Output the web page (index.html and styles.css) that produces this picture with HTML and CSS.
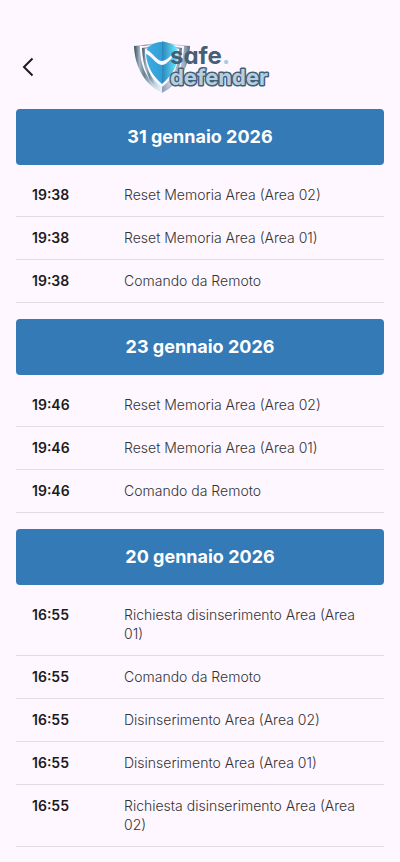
FILE: index.html
```html
<!DOCTYPE html>
<html lang="it">
<head>
    <meta charset="UTF-8">
    <meta name="viewport" content="width=device-width, initial-scale=1.0">
    <title>Safe Defender</title>
    <link rel="stylesheet" href="styles.css">
</head>
<body>
    <header class="header">
        <button class="back" type="button" aria-label="Indietro">
            <svg width="12" height="20" viewBox="0 0 12 20" fill="none" stroke="#1d1b20" stroke-width="2">
                <path d="M10.5 1.5L2 10l8.5 8.5"/>
            </svg>
        </button>
        <svg class="logo" width="142" height="56" viewBox="0 0 142 56" role="img" aria-label="safe. defender">
            <defs>
                <linearGradient id="steel" x1="0" y1="0" x2="1" y2="0">
                    <stop offset="0" stop-color="#34495a"/>
                    <stop offset="0.1" stop-color="#a4b8c6"/>
                    <stop offset="0.18" stop-color="#668195"/>
                    <stop offset="0.32" stop-color="#c3d3df"/>
                    <stop offset="0.49" stop-color="#edf2f8"/>
                    <stop offset="0.51" stop-color="#8f9dba"/>
                    <stop offset="0.75" stop-color="#d8deeb"/>
                    <stop offset="0.9" stop-color="#9aaabd"/>
                    <stop offset="1" stop-color="#53697d"/>
                </linearGradient>
                <linearGradient id="blue" gradientUnits="userSpaceOnUse" x1="17" y1="0" x2="49" y2="0">
                    <stop offset="0" stop-color="#3aaee2"/>
                    <stop offset="0.49" stop-color="#319fd6"/>
                    <stop offset="0.51" stop-color="#2e88bd"/>
                    <stop offset="0.8" stop-color="#4fc6e8"/>
                    <stop offset="1" stop-color="#70f0fb"/>
                </linearGradient>
            </defs>
            <!-- shield -->
            <path fill="url(#steel)" d="M5 7c10-1 19-2 28-5 9 3 18 4 28 5-1 20-9 37-28 47C14 44 6 27 5 7z"/>
            <path fill="#fef7ff" d="M11 7c8 0 15-1 22-4 7 3 14 4 22 4-1 20-6 33-22 43C17 41 11 27 11 7z"/>
            <path fill="url(#steel)" d="M13 9c7-1 14-3 20-6 6 3 13 5 20 6-1 19-6 35-20 44C19 44 14 28 13 9z"/>
            <path fill="#fef7ff" d="M16 10c6-1 12-3 17-7 5 4 11 6 17 7-1 18-5 29-17 38C21 40 16 28 16 10z"/>
            <path fill="url(#blue)" d="M18 10c4-5 9-7 15-7s12 2 15 7l1 3c-6 0-10 9-16 9-5 0-9-8-15-11z"/>
            <path fill="url(#blue)" d="M17 15c6 2 10 11 16 11s10-10 16-11c0 13-7 22-16 30-9-8-15-17-16-30z"/>
            <!-- wordmark -->
            <text class="logo-safe" x="41" y="25">safe<tspan class="logo-dot">.</tspan></text>
            <text class="logo-defender" x="41" y="46">defender</text>
        </svg>
    </header>

    <main class="events">
        <section class="day">
            <h2 class="day-title">31 gennaio 2026</h2>
            <ul class="list">
                <li class="row"><time class="time">19:38</time><span class="text">Reset Memoria Area (Area 02)</span></li>
                <li class="row"><time class="time">19:38</time><span class="text">Reset Memoria Area (Area 01)</span></li>
                <li class="row"><time class="time">19:38</time><span class="text">Comando da Remoto</span></li>
            </ul>
        </section>
        <section class="day">
            <h2 class="day-title">23 gennaio 2026</h2>
            <ul class="list">
                <li class="row"><time class="time">19:46</time><span class="text">Reset Memoria Area (Area 02)</span></li>
                <li class="row"><time class="time">19:46</time><span class="text">Reset Memoria Area (Area 01)</span></li>
                <li class="row"><time class="time">19:46</time><span class="text">Comando da Remoto</span></li>
            </ul>
        </section>
        <section class="day">
            <h2 class="day-title">20 gennaio 2026</h2>
            <ul class="list">
                <li class="row"><time class="time">16:55</time><span class="text">Richiesta disinserimento Area (Area 01)</span></li>
                <li class="row"><time class="time">16:55</time><span class="text">Comando da Remoto</span></li>
                <li class="row"><time class="time">16:55</time><span class="text">Disinserimento Area (Area 02)</span></li>
                <li class="row"><time class="time">16:55</time><span class="text">Disinserimento Area (Area 01)</span></li>
                <li class="row"><time class="time">16:55</time><span class="text">Richiesta disinserimento Area (Area 02)</span></li>
            </ul>
        </section>
    </main>
</body>
</html>
```
FILE: styles.css
```css
* {
    margin: 0;
    padding: 0;
    box-sizing: border-box;
}

body {
    font-family: Inter, 'Liberation Sans', sans-serif;
    background-color: #fef7ff;
    color: #1d1b20;
}

/* Header */
.header {
    display: grid;
    grid-template-columns: 56px 1fr 56px;
    align-items: center;
    padding: 39px 0 14px;
}

.back {
    display: flex;
    align-items: center;
    justify-content: center;
    height: 56px;
    border: none;
    background: none;
    cursor: pointer;
}

.logo {
    justify-self: center;
}

.logo-safe,
.logo-defender {
    font-weight: 700;
    font-feature-settings: 'cv11';
}

.logo-safe {
    font-size: 24px;
    fill: #455f76;
}

.logo-dot {
    fill: #a9c9e3;
}

.logo-defender {
    font-size: 22px;
    fill: #b5cfe2;
    stroke: #455f76;
    stroke-width: 3px;
    stroke-linejoin: round;
    paint-order: stroke;
}

/* Events grouped by day */
.events {
    padding: 0 16px 15px;
}

.day + .day {
    margin-top: 16px;
}

.day-title {
    background-color: #337ab7;
    color: #fff;
    font-size: 18px;
    font-weight: 700;
    line-height: 24px;
    text-align: center;
    padding: 16px;
    border-radius: 4px;
    margin-bottom: 9px;
}

.list {
    list-style: none;
}

.row {
    display: flex;
    padding: 11px 16px 12px;
    border-bottom: 1px solid #e2dde5;
    font-size: 14px;
    line-height: 19px;
}

.time {
    flex: 0 0 92px;
    font-weight: 600;
}

.text {
    flex: 1;
    font-weight: 300;
    color: #333;
}
```
